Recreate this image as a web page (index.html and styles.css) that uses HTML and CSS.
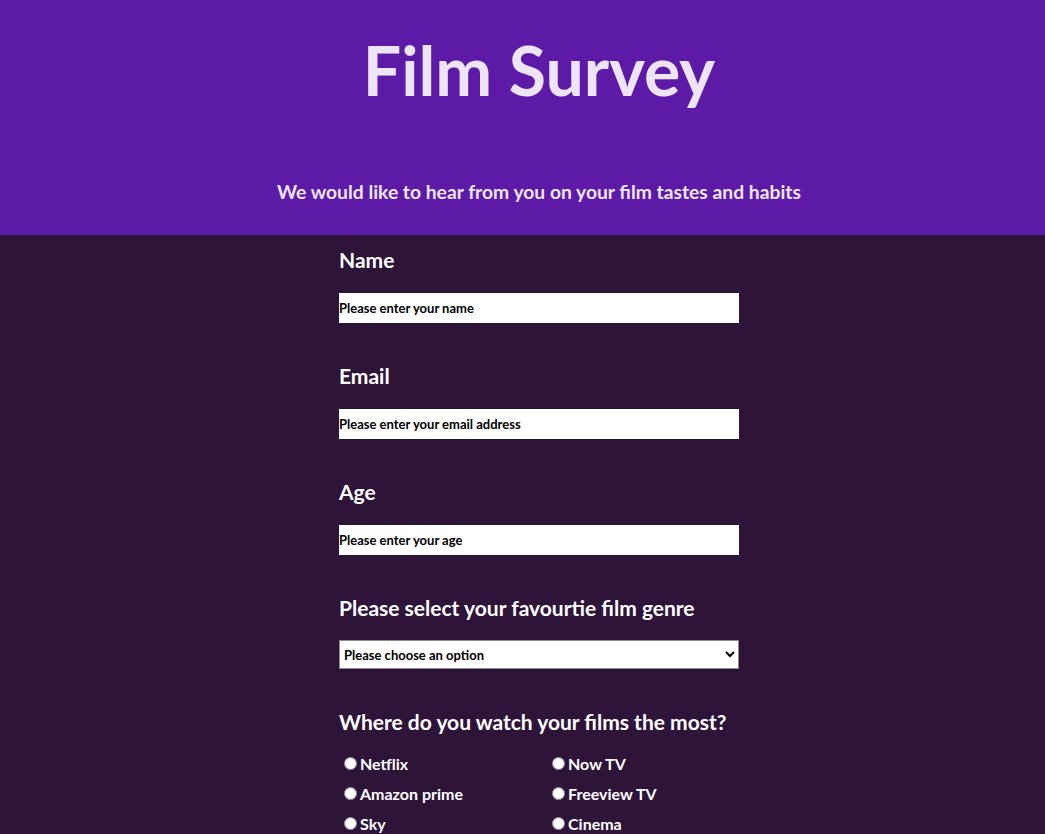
FILE: index.html
```html
<!DOCTYPE html>
<html lang="en">
<head>
<meta charset="utf-8">
<title>Film Survey</title>
<link rel="stylesheet" href="styles.css">
</head>
<body>
<header class="hero">
  <h1 class="hero-title">Film Survey</h1>
  <p class="hero-sub">We would like to hear from you on your film tastes and habits</p>
</header>
<main class="wrap">
  <form class="survey">
    <div class="field">
      <label class="field-label" for="name">Name</label>
      <input class="text-input" id="name" type="text" placeholder="Please enter your name">
    </div>
    <div class="field">
      <label class="field-label" for="email">Email</label>
      <input class="text-input" id="email" type="email" placeholder="Please enter your email address">
    </div>
    <div class="field">
      <label class="field-label" for="age">Age</label>
      <input class="text-input" id="age" type="number" placeholder="Please enter your age">
    </div>
    <div class="field">
      <label class="field-label" for="genre">Please select your favourtie film genre</label>
      <select class="select-input" id="genre">
        <option>Please choose an option</option>
      </select>
    </div>
    <div class="field">
      <p class="field-label">Where do you watch your films the most?</p>
      <div class="radio-grid">
        <label class="radio"><input type="radio" name="where"><span>Netflix</span></label>
        <label class="radio"><input type="radio" name="where"><span>Now TV</span></label>
        <label class="radio"><input type="radio" name="where"><span>Amazon prime</span></label>
        <label class="radio"><input type="radio" name="where"><span>Freeview TV</span></label>
        <label class="radio"><input type="radio" name="where"><span>Sky</span></label>
        <label class="radio"><input type="radio" name="where"><span>Cinema</span></label>
      </div>
    </div>
  </form>
</main>
</body>
</html>
```

FILE: styles.css
```css
html, body {
  margin: 0;
  padding: 0;
}
body {
  background: #2e1439;
  font-family: "Lato", "Noto Sans", sans-serif;
  color: #ffffff;
}
.hero {
  background: #5c1aa6;
  color: #ede5f7;
  text-align: center;
  height: 235px;
  box-sizing: border-box;
  padding-top: 30px;
  padding-left: 33px;
}
.hero-title {
  margin: 0;
  font-size: 68px;
  line-height: 80px;
  font-weight: 700;
}
.hero-sub {
  margin: 70px 0 0;
  font-size: 19.3px;
  line-height: 24px;
  font-weight: 700;
}
.wrap {
  width: 433px;
  margin: 0 auto;
  padding-left: 33px;
  box-sizing: border-box;
}
.survey {
  width: 400px;
  padding-top: 12px;
}
.field {
  display: flex;
  flex-direction: column;
  margin-bottom: 40px;
}
.field-label {
  margin: 0;
  font-size: 21px;
  line-height: 26px;
  font-weight: 700;
  color: #ffffff;
}
.text-input {
  margin-top: 20px;
  height: 30px;
  width: 400px;
  box-sizing: border-box;
  border: none;
  padding: 0;
  background: #ffffff;
  font-family: inherit;
  font-size: 13px;
  font-weight: 700;
  color: #000;
}
.text-input::placeholder {
  color: #000;
  opacity: 1;
}
.select-input {
  margin-top: 19px;
  height: 29px;
  width: 400px;
  box-sizing: border-box;
  border: 1px solid #8a8a8a;
  border-radius: 0;
  background: #ffffff;
  font-family: inherit;
  font-size: 13px;
  font-weight: 700;
  color: #000;
  padding: 0;
}
.radio-grid {
  margin-top: 17px;
  display: grid;
  grid-template-columns: 208px 1fr;
  row-gap: 8px;
}
.radio {
  display: flex;
  align-items: center;
  height: 22px;
  font-size: 16px;
  font-weight: 700;
}
.radio input {
  margin: 0 3px 0 5px;
  width: 13px;
  height: 13px;
}
```
